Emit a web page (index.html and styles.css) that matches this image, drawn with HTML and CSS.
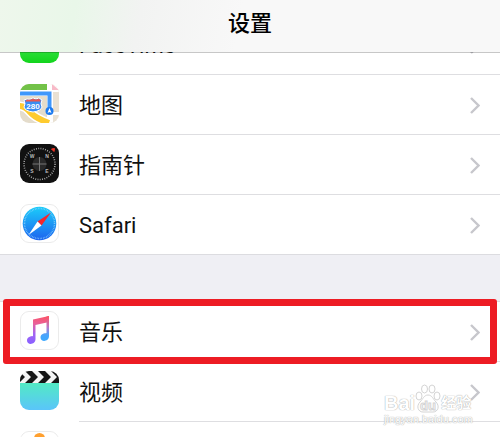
FILE: index.html
```
<!DOCTYPE html>
<html lang="zh-CN">
<head>
  <meta charset="utf-8">
  <meta name="viewport" content="width=device-width, initial-scale=1">
  <title>设置</title>
  <link rel="stylesheet" href="styles.css">
</head>
<body>

<header class="navbar">
  <h1>设置</h1>
</header>

<main class="settings">
  <ul class="group group-first">
    <li>
      <a class="row" href="#facetime">
        <svg class="icon" viewBox="0 0 39 39">
          <defs>
            <linearGradient id="green" x1="0" y1="0" x2="0" y2="1">
              <stop offset="0" stop-color="#5ff777"/>
              <stop offset="1" stop-color="#12d41c"/>
            </linearGradient>
          </defs>
          <rect width="39" height="39" rx="9" fill="url(#green)"/>
        </svg>
        <span class="label">FaceTime</span>
        <svg class="chevron" viewBox="0 0 10 17"><path d="M1 1l7.5 7.5L1 16"/></svg>
      </a>
    </li>
    <li>
      <a class="row" href="#maps">
        <svg class="icon" viewBox="0 0 39 39">
          <defs><clipPath id="tile"><rect width="39" height="39" rx="9"/></clipPath></defs>
          <g clip-path="url(#tile)">
            <rect width="39" height="39" fill="#e4dccb"/>
            <path d="M0 0h27v6H0z" fill="#72c248"/>
            <path d="M27 0h12v39H27z" fill="#fff"/>
            <path d="M32 0l7 6h-7z" fill="#f8bac8"/>
            <path d="M33 8h6v20h-6zM33 31h6v8h-6z" fill="#e9e1d3"/>
            <path d="M-1 22q6 0 11 6t19 11" fill="none" stroke="#fff" stroke-width="9"/>
            <path d="M-1 22q6 0 11 6t19 11" fill="none" stroke="#fecb2f" stroke-width="6"/>
            <path d="M0 6h32v20h-5V12H0z" fill="#fff"/>
            <path d="M0 9.5h29.5v16" fill="none" stroke="#3f97fb" stroke-width="4"/>
            <circle cx="29.5" cy="27" r="4" fill="#1c7bf0"/>
            <path d="M29.5 24l2 5-2-1-2 1z" fill="#fff"/>
            <path d="M7 15q3 1 6-1 3 2 6 0l3 2q-2 4 0 7-1 4-9 5-8-1-9-5 2-3 0-7z" fill="#3b8df2" stroke="#fff"/>
            <path d="M7 15.5q3 1 6-1 3 2 6 0l2 3H5z" fill="#e9574e"/>
            <text class="shield" x="13" y="25">280</text>
          </g>
        </svg>
        <span class="label">地图</span>
        <svg class="chevron" viewBox="0 0 10 17"><path d="M1 1l7.5 7.5L1 16"/></svg>
      </a>
    </li>
    <li>
      <a class="row" href="#compass">
        <svg class="icon" viewBox="0 0 39 39">
          <rect width="39" height="39" rx="9" fill="#111"/>
          <circle cx="19.5" cy="20" r="15.5" fill="none" stroke="#aaa" stroke-width="1.6" stroke-dasharray=".9 1.4"/>
          <circle cx="19.5" cy="20" r="7" fill="#292929"/>
          <path d="M12.5 20h14M19.5 13v14" stroke="#777"/>
          <path d="M31.5 5l3-.5-.5 3z" fill="#f33427" stroke="#f33427"/>
          <g class="points">
            <text x="12" y="14">W</text>
            <text x="27" y="14">N</text>
            <text x="12" y="29">S</text>
            <text x="27" y="29">E</text>
          </g>
        </svg>
        <span class="label">指南针</span>
        <svg class="chevron" viewBox="0 0 10 17"><path d="M1 1l7.5 7.5L1 16"/></svg>
      </a>
    </li>
    <li>
      <a class="row" href="#safari">
        <svg class="icon" viewBox="0 0 39 39">
          <defs>
            <linearGradient id="sea" x1="0" y1="0" x2="0" y2="1">
              <stop offset="0" stop-color="#1bcdfa"/>
              <stop offset="1" stop-color="#1e63ef"/>
            </linearGradient>
          </defs>
          <rect class="tile" x=".5" y=".5" width="38" height="38" rx="8.5"/>
          <circle cx="19.5" cy="19.5" r="16.8" fill="url(#sea)"/>
          <circle cx="19.5" cy="19.5" r="15" fill="none" stroke="#8bd3fb" stroke-width="1.5" stroke-dasharray=".6 1"/>
          <path d="M31 8.5L17.5 17.5l4 4z" fill="#f8262c"/>
          <path d="M8.5 31l9-13.5 4 4z" fill="#fff"/>
        </svg>
        <span class="label">Safari</span>
        <svg class="chevron" viewBox="0 0 10 17"><path d="M1 1l7.5 7.5L1 16"/></svg>
      </a>
    </li>
  </ul>

  <ul class="group">
    <li class="marked">
      <a class="row" href="#music">
        <svg class="icon" viewBox="0 0 39 39">
          <defs>
            <linearGradient id="note" gradientUnits="userSpaceOnUse" x1="22" y1="5" x2="18" y2="33">
              <stop offset="0" stop-color="#fb5468"/>
              <stop offset=".3" stop-color="#e9609a"/>
              <stop offset=".65" stop-color="#a565f2"/>
              <stop offset="1" stop-color="#8a60ff"/>
            </linearGradient>
            <linearGradient id="stem" gradientUnits="userSpaceOnUse" x1="26" y1="6" x2="26" y2="30">
              <stop offset="0" stop-color="#fb5468"/>
              <stop offset=".45" stop-color="#b27bcf"/>
              <stop offset=".75" stop-color="#4aa5fb"/>
              <stop offset="1" stop-color="#3aa8ff"/>
            </linearGradient>
          </defs>
          <rect class="tile" x=".5" y=".5" width="38" height="38" rx="8.5"/>
          <path d="M13 8.5L29 5v6l-13.5 3v14c0 6-8.5 6.5-8.5 1.5 0-4 4-4 6-4.5z" fill="url(#note)"/>
          <path d="M26.5 5.6L29 5v20c0 6-8.5 6.5-8.5 1.5 0-4 4-4 6-4.5z" fill="url(#stem)"/>
        </svg>
        <span class="label">音乐</span>
        <svg class="chevron" viewBox="0 0 10 17"><path d="M1 1l7.5 7.5L1 16"/></svg>
      </a>
    </li>
    <li>
      <a class="row" href="#videos">
        <svg class="icon" viewBox="0 0 39 39">
          <defs>
            <linearGradient id="aqua" x1="0" y1="0" x2="0" y2="1">
              <stop offset="0" stop-color="#52eac4"/>
              <stop offset="1" stop-color="#5ac5fa"/>
            </linearGradient>
          </defs>
          <g clip-path="url(#tile)">
            <rect width="39" height="39" fill="#f4f4f4"/>
            <path d="M-1 0l6 6-6 6zM5 0h7l6 6-6 6H5l6-6zM18 0h7l6 6-6 6h-7l6-6zM31 0h8v12h-8l6-6z" fill="#151515"/>
            <rect y="12" width="39" height="27" fill="url(#aqua)"/>
          </g>
        </svg>
        <span class="label">视频</span>
        <svg class="chevron" viewBox="0 0 10 17"><path d="M1 1l7.5 7.5L1 16"/></svg>
      </a>
    </li>
    <li>
      <a class="row" href="#photos">
        <svg class="icon" viewBox="0 0 39 39">
          <rect class="tile" x=".5" y=".5" width="38" height="38" rx="8.5"/>
          <circle cx="19.5" cy="7.5" r="5.5" fill="#ffa02f"/>
        </svg>
      </a>
    </li>
  </ul>
</main>

<div class="watermark">
  <div class="brand">
    <span>Bai</span>
    <svg class="paw" viewBox="0 0 26 29">
      <ellipse cx="4" cy="12" rx="3" ry="4"/>
      <ellipse cx="9.5" cy="5" rx="3" ry="4"/>
      <ellipse cx="17" cy="5" rx="3" ry="4"/>
      <ellipse cx="22" cy="12" rx="3" ry="4"/>
      <path d="M13 11c4 0 5 4 8 7 4 4 2 10-3 10H8c-5 0-7-6-3-10 3-3 4-7 8-7z"/>
      <text x="13" y="26">du</text>
    </svg>
    <span class="cn">经验</span>
  </div>
  <div class="site">jingyan.baidu.com</div>
</div>

</body>
</html>
```
FILE: styles.css
```
* {
  box-sizing: border-box;
}

html,
body {
  height: 100%;
}

body {
  margin: 0;
  overflow: hidden;
  position: relative;
  background: #efeff4;
  color: #111;
  font-family: Roboto, "Noto Sans CJK SC", sans-serif;
  font-size: 22px;
}

.navbar {
  position: sticky;
  top: 0;
  z-index: 2;
  height: 53px;
  padding-top: 8px;
  background: linear-gradient(100deg, #eef7ec 0, #e9f7e9 15%, #f2f3f2 28%, #f8f8f8 48%, #f8f8f8 100%) padding-box;
  border-bottom: 1px solid rgba(0, 0, 0, 0.22);
}

.navbar h1 {
  margin: 0;
  font-size: 22px;
  font-weight: 500;
  line-height: 32px;
  text-align: center;
  color: #000;
}

.group {
  margin: 0 0 46px;
  padding: 0;
  list-style: none;
  background: #fff;
}

.group-first {
  margin-top: -39px;
  border-bottom: 1px solid #dcdce0;
}

.row {
  display: flex;
  align-items: center;
  position: relative;
  height: 60px;
  padding: 2px 20px 0;
  color: inherit;
  text-decoration: none;
}

.icon {
  flex: none;
  width: 39px;
  height: 39px;
  margin: 0 20px 3px 0;
}

.label {
  flex: 1;
  padding-top: 2px;
  line-height: 32px;
}

.chevron {
  flex: none;
  width: 10px;
  height: 17px;
  fill: none;
  stroke: #c7c7cc;
  stroke-width: 2.4;
}

/* hairline above each row, indented to the label except on the first */
.row::before {
  content: "";
  position: absolute;
  top: 0;
  left: 0;
  right: 0;
  height: 1px;
  background: #dedee1;
}

li + li .row::before {
  left: 79px;
}

.tile {
  fill: #fff;
  stroke: #ebebeb;
}

.shield {
  fill: #fff;
  font: bold 8px "Liberation Sans", sans-serif;
  text-anchor: middle;
}

.points {
  fill: #bbb;
  font: bold 5px "Liberation Sans", sans-serif;
  text-anchor: middle;
}

.marked {
  position: relative;
}

.marked::after {
  content: "";
  position: absolute;
  z-index: 1;
  top: -2px;
  right: 3px;
  bottom: -3px;
  left: 3px;
  border: 7px solid #ed1c24;
  border-radius: 3px;
}

.watermark {
  position: absolute;
  right: 28px;
  bottom: 11px;
  width: 88px;
  color: #fff;
  text-shadow: 0 0 1px #aaa, 0 0 1px #bbb;
}

.brand {
  display: flex;
  align-items: flex-end;
  height: 32px;
  font: bold 20px/20px "Liberation Sans", "Noto Sans CJK SC", sans-serif;
}

.brand .cn {
  font-size: 15px;
}

.paw {
  flex: none;
  width: 26px;
  height: 29px;
  fill: #fff;
  stroke: #d4d4d4;
}

.paw text {
  fill: #fff;
  text-shadow: none;
  font: bold 13px "Liberation Sans", sans-serif;
  text-anchor: middle;
}

.site {
  font: 11px/13px "Liberation Sans", sans-serif;
}
```
